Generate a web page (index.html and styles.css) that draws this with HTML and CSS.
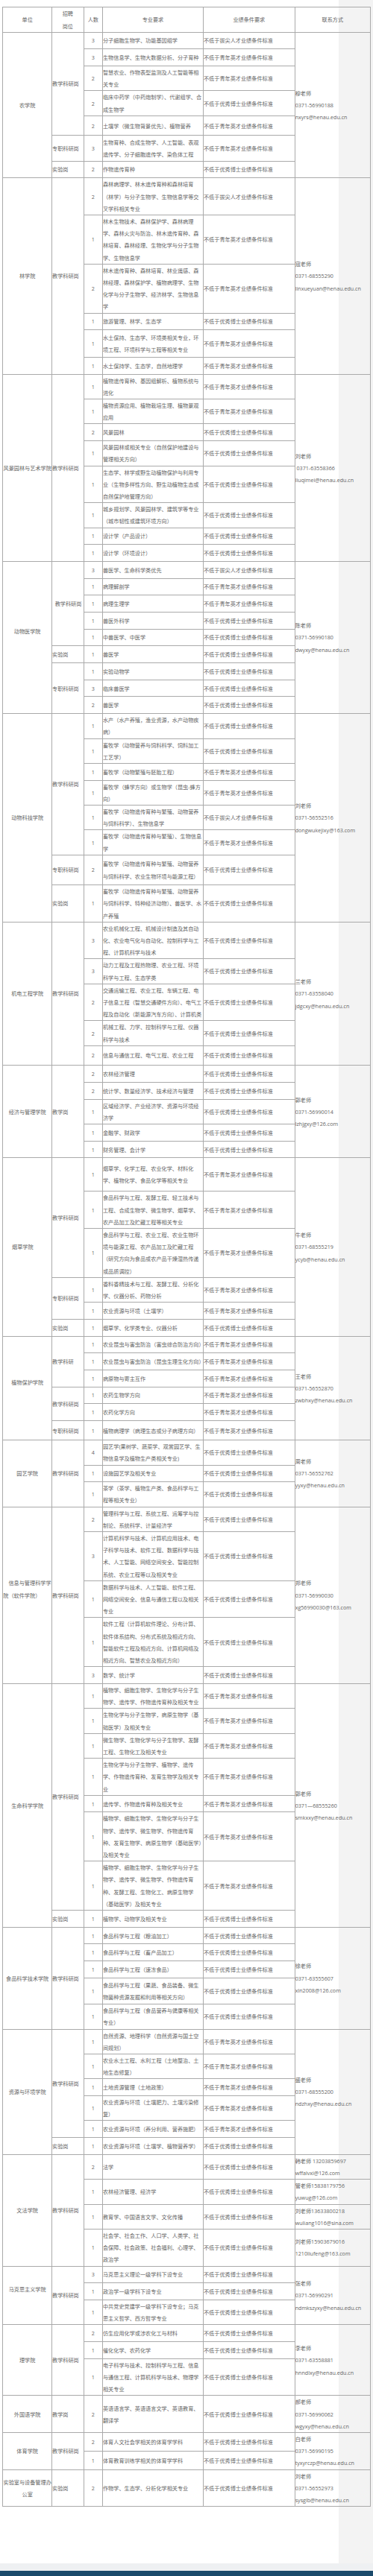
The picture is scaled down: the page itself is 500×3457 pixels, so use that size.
FILE: index.html
```html
<!DOCTYPE html>
<html lang="zh-CN">
<head>
<meta charset="utf-8">
<title>招聘岗位</title>
<link rel="stylesheet" href="styles.css">
</head>
<body>
<div class="page">
<div class="content">
<table class="jobs">
<colgroup>
<col class="c-unit"><col class="c-post"><col class="c-num"><col class="c-major"><col class="c-req"><col class="c-contact">
</colgroup>
<thead>
<tr class="head"><th>单位</th><th>招聘<br>岗位</th><th>人数</th><th>专业要求</th><th>业绩条件要求</th><th>联系方式</th></tr>
</thead>
<tbody>
<!-- 农学院 -->
<tr><td class="unit" rowspan="7">农学院</td><td class="post" rowspan="5">教学科研岗</td><td class="num">3</td><td>分子细胞生物学、功能基因组学</td><td>不低于拔尖人才业绩条件标准</td><td class="contact" rowspan="7">穆老师<br>0371-56990188<br>nxyrs@henau.edu.cn</td></tr>
<tr><td class="num">3</td><td>生物信息学、生物大数据分析、分子育种</td><td>不低于青年英才业绩条件标准</td></tr>
<tr><td class="num">2</td><td>智慧农业、作物表型监测及人工智能等相关专业</td><td>不低于青年英才业绩条件标准</td></tr>
<tr><td class="num">2</td><td>临床中药学（中药炮制学）、代谢组学、合成生物学</td><td>不低于优秀博士业绩条件标准</td></tr>
<tr class="row-27"><td class="num">2</td><td>土壤学（微生物背景优先）、植物营养</td><td>不低于青年英才业绩条件标准</td></tr>
<tr class="row-34"><td class="post">专职科研岗</td><td class="num">3</td><td>生物育种、合成生物学、人工智能、表观遗传学、分子细胞遗传学、染色体工程</td><td>不低于青年英才业绩条件标准</td></tr>
<tr><td class="post">实验岗</td><td class="num">2</td><td>作物遗传育种</td><td>不低于优秀博士业绩条件标准</td></tr>
<!-- 林学院 -->
<tr><td class="unit" rowspan="6">林学院</td><td class="post" rowspan="6">教学科研岗</td><td class="num">2</td><td>森林病理学、林木遗传育种和森林培育（林学）与分子生物学、生物信息学等交叉学科相关专业</td><td>不低于拔尖人才业绩条件标准</td><td class="contact" rowspan="6">寇老师<br>0371-68555290<br>linxueyuan@henau.edu.cn</td></tr>
<tr><td class="num">1</td><td>林木生物技术、森林保护学、森林病理学、森林火灾与防治、林木遗传育种、森林培育、森林经理、生物化学与分子生物学、生物信息学</td><td>不低于青年英才业绩条件标准</td></tr>
<tr><td class="num">2</td><td>林木遗传育种、森林培育、林业遥感、森林经理、森林保护学、植物病理学、生物化学与分子生物学、经济林学、生物信息学</td><td>不低于青年英才业绩条件标准</td></tr>
<tr><td class="num">1</td><td>旅游管理、林学、生态学</td><td>不低于优秀博士业绩条件标准</td></tr>
<tr class="row-37"><td class="num">1</td><td>水土保持、生态学、环境类相关专业，环境工程、环境科学与工程等相关专业</td><td>不低于青年英才业绩条件标准</td></tr>
<tr><td class="num">1</td><td>水土保持学、生态学，自然地理学</td><td>不低于青年英才业绩条件标准</td></tr>
<!-- 风景园林与艺术学院 -->
<tr><td class="unit" rowspan="8">风景园林与艺术学院</td><td class="post" rowspan="8">教学科研岗</td><td class="num">1</td><td>植物遗传育种、基因组解析、植物系统与进化</td><td>不低于青年英才业绩条件标准</td><td class="contact" rowspan="8">刘老师<br>&nbsp;0371-63558366<br>liuqimei@henau.edu.cn</td></tr>
<tr><td class="num">1</td><td>植物资源应用、植物栽培生理、植物景观应用</td><td>不低于青年英才业绩条件标准</td></tr>
<tr><td class="num">2</td><td>风景园林</td><td>不低于优秀博士业绩条件标准</td></tr>
<tr><td class="num">1</td><td>风景园林或相关专业（自然保护地建设与管理相关方向）</td><td>不低于优秀博士业绩条件标准</td></tr>
<tr><td class="num">1</td><td>生态学、林学或野生动植物保护与利用专业（生物多样性方向、野生动植物生态或自然保护地管理方向）</td><td>不低于优秀博士业绩条件标准</td></tr>
<tr><td class="num">1</td><td>城乡规划学、风景园林学、建筑学等专业（城市韧性或建筑环境方向）</td><td>不低于优秀博士业绩条件标准</td></tr>
<tr><td class="num">1</td><td>设计学（产品设计）</td><td>不低于优秀博士业绩条件标准</td></tr>
<tr><td class="num">1</td><td>设计学（环境设计）</td><td>不低于优秀博士业绩条件标准</td></tr>
<!-- 动物医学院 -->
<tr><td class="unit lift" rowspan="9">动物医学院</td><td class="post indent" rowspan="5">教学科研岗</td><td class="num">3</td><td>兽医学、生命科学类优先</td><td>不低于拔尖人才业绩条件标准</td><td class="contact" rowspan="9">陈老师<br>0371-56990180<br>dwyxy@henau.edu.cn</td></tr>
<tr><td class="num">1</td><td>病理解剖学</td><td>不低于青年英才业绩条件标准</td></tr>
<tr><td class="num">1</td><td>病理生理学</td><td>不低于青年英才业绩条件标准</td></tr>
<tr><td class="num">1</td><td>兽医外科学</td><td>不低于优秀博士业绩条件标准</td></tr>
<tr><td class="num">1</td><td>中兽医学、中医学</td><td>不低于优秀博士业绩条件标准</td></tr>
<tr><td class="post">实验岗</td><td class="num">1</td><td>兽医学</td><td>不低于优秀博士业绩条件标准</td></tr>
<tr><td class="post" rowspan="3">专职科研岗</td><td class="num">1</td><td>实验动物学</td><td>不低于优秀博士业绩条件标准</td></tr>
<tr><td class="num">3</td><td>临床兽医学</td><td>不低于优秀博士业绩条件标准</td></tr>
<tr><td class="num">2</td><td>兽医学</td><td>不低于优秀博士业绩条件标准</td></tr>
<!-- 动物科技学院 -->
<tr><td class="unit" rowspan="8">动物科技学院</td><td class="post" rowspan="6">教学科研岗</td><td class="num">1</td><td>水产（水产养殖，渔业资源，水产动物疾病）</td><td>不低于优秀博士业绩条件标准</td><td class="contact" rowspan="8">刘老师<br>0371-56552516<br>dongwukejixy@163.com</td></tr>
<tr><td class="num">1</td><td>畜牧学（动物营养与饲料科学、饲料加工工艺学）</td><td>不低于优秀博士业绩条件标准</td></tr>
<tr><td class="num">1</td><td>畜牧学（动物繁殖与胚胎工程）</td><td>不低于青年英才业绩条件标准</td></tr>
<tr><td class="num">1</td><td>畜牧学（蜂学方向）或生物学（昆虫-蜂方向）</td><td>不低于青年英才业绩条件标准</td></tr>
<tr><td class="num">1</td><td>畜牧学（动物遗传育种与繁殖、动物营养与饲料科学）、生物信息学</td><td>不低于拔尖人才业绩条件标准</td></tr>
<tr><td class="num">1</td><td>畜牧学（动物遗传育种与繁殖）、生物信息学</td><td>不低于青年英才业绩条件标准</td></tr>
<tr class="row-40"><td class="post">专职科研岗</td><td class="num">2</td><td>畜牧学（动物遗传育种与繁殖、动物营养与饲料科学、农业生物环境与能源工程）</td><td>不低于优秀博士业绩条件标准</td></tr>
<tr><td class="post">实验岗</td><td class="num">1</td><td>畜牧学（动物遗传育种与繁殖、动物营养与饲料科学、特种经济动物）、兽医学、水产养殖</td><td>不低于优秀博士业绩条件标准</td></tr>
<!-- 机电工程学院 -->
<tr><td class="unit" rowspan="5">机电工程学院</td><td class="post" rowspan="5">教学科研岗</td><td class="num">3</td><td>农业机械化工程、机械设计制造及其自动化、农业电气化与自动化、控制科学与工程、计算机科学与技术</td><td>不低于优秀博士业绩条件标准</td><td class="contact" rowspan="5">兰老师<br>0371-63558040<br>jdgcxy@henau.edu.cn</td></tr>
<tr><td class="num">3</td><td>动力工程及工程热物理、农业工程、环境科学与工程、生态学类</td><td>不低于优秀博士业绩条件标准</td></tr>
<tr><td class="num">2</td><td>交通运输工程、农业工程、车辆工程、电子信息工程（智慧交通硬件方向）、电气工程及自动化（新能源汽车方向）、计算机类</td><td>不低于优秀博士业绩条件标准</td></tr>
<tr><td class="num">2</td><td>机械工程、力学、控制科学与工程、仪器科学与技术</td><td>不低于优秀博士业绩条件标准</td></tr>
<tr class="row-27"><td class="num">2</td><td>信息与通信工程、电气工程、农业工程</td><td>不低于优秀博士业绩条件标准</td></tr>
<!-- 经济与管理学院 -->
<tr><td class="unit" rowspan="5">经济与管理学院</td><td class="post" rowspan="5">教学岗</td><td class="num">2</td><td>农林经济管理</td><td>不低于优秀博士业绩条件标准</td><td class="contact" rowspan="5">郭老师<br>0371-56990014<br>lzhjgxy@126.com</td></tr>
<tr><td class="num">2</td><td>统计学、数量经济学、技术经济与管理</td><td>不低于优秀博士业绩条件标准</td></tr>
<tr><td class="num">1</td><td>区域经济学、产业经济学、资源与环境经济学</td><td>不低于优秀博士业绩条件标准</td></tr>
<tr><td class="num">1</td><td>金融学、财政学</td><td>不低于优秀博士业绩条件标准</td></tr>
<tr><td class="num">1</td><td>财务管理、会计学</td><td>不低于优秀博士业绩条件标准</td></tr>
<!-- 烟草学院 -->
<tr class="row-45"><td class="unit shift" rowspan="6">烟草学院</td><td class="post" rowspan="3">教学科研岗</td><td class="num">1</td><td>烟草学、化学工程、农业化学、材料化学、植物化学、食品化学等相关专业</td><td>不低于青年英才业绩条件标准</td><td class="contact" rowspan="6">牛老师<br>0371-68555219<br>ycyb@henau.edu.cn</td></tr>
<tr><td class="num">1</td><td>食品科学与工程、发酵工程、轻工技术与工程、合成生物学、微生物学、烟草学、农产品加工及贮藏工程等相关专业</td><td>不低于青年英才业绩条件标准</td></tr>
<tr><td class="num">1</td><td>食品科学与工程、农业工程、农业生物环境与能源工程、农产品加工及贮藏工程（研究方向为食品或农产品干燥湿热传递或品质调控）</td><td>不低于青年英才业绩条件标准</td></tr>
<tr><td class="post" rowspan="2">专职科研岗</td><td class="num">1</td><td>香料香精技术与工程、发酵工程、分析化学、仪器分析、药物分析</td><td>不低于青年英才业绩条件标准</td></tr>
<tr><td class="num">1</td><td>农业资源与环境（土壤学）</td><td>不低于青年英才业绩条件标准</td></tr>
<tr><td class="post">实验岗</td><td class="num">1</td><td>烟草学、化学类专业、仪器分析</td><td>不低于优秀博士业绩条件标准</td></tr>
<!-- 植物保护学院 -->
<tr><td class="unit lift" rowspan="6">植物保护学院</td><td class="post" rowspan="3">教学科研</td><td class="num">1</td><td>农业昆虫与害虫防治（害虫综合防治方向）</td><td>不低于青年英才业绩条件标准</td><td class="contact" rowspan="6">王老师<br>0371-56552870<br>zwbhxy@henau.edu.cn</td></tr>
<tr><td class="num">1</td><td>农业昆虫与害虫防治（昆虫生理生化方向）</td><td>不低于青年英才业绩条件标准</td></tr>
<tr><td class="num">1</td><td>病原物与寄主互作</td><td>不低于青年英才业绩条件标准</td></tr>
<tr><td class="post" rowspan="2">教学科研岗</td><td class="num">1</td><td>农药生物学方向</td><td>不低于青年英才业绩条件标准</td></tr>
<tr><td class="num">1</td><td>农药化学方向</td><td>不低于青年英才业绩条件标准</td></tr>
<tr class="row-26"><td class="post">专职科研岗</td><td class="num">1</td><td>植物病理学（病理生态或分子病理方向）</td><td>不低于青年英才业绩条件标准</td></tr>
<!-- 园艺学院 -->
<tr><td class="unit" rowspan="3">园艺学院</td><td class="post" rowspan="3">教学科研岗</td><td class="num">4</td><td>园艺学(果树学、蔬菜学、观赏园艺学、生物信息学及植物生产类相关专业)</td><td>不低于优秀博士业绩条件标准</td><td class="contact" rowspan="3">周老师<br>0371-56552762<br>yyxy@henau.edu.cn</td></tr>
<tr><td class="num">1</td><td>设施园艺学及相关专业</td><td>不低于优秀博士业绩条件标准</td></tr>
<tr><td class="num">1</td><td>茶学（茶学、植物生产类、食品科学与工程等相关专业）</td><td>不低于优秀博士业绩条件标准</td></tr>
<!-- 信息与管理科学学院 -->
<tr><td class="unit left lift" rowspan="5">　信息与管理科学学院（软件学院）</td><td class="post" rowspan="5">教学科研岗</td><td class="num">2</td><td>管理科学与工程、系统工程、运筹学与控制论、系统科学、计量经济学</td><td>不低于优秀博士业绩条件标准</td><td class="contact" rowspan="5">郑老师<br>0371-56990030<br>xg56990030@163.com</td></tr>
<tr><td class="num">3</td><td>计算机科学与技术、计算机应用技术、电子科学与技术、软件工程、数据科学与技术、人工智能、网络空间安全、智能控制系统、农业工程等以及相关专业</td><td>不低于优秀博士业绩条件标准</td></tr>
<tr><td class="num">1</td><td>数据科学与技术、人工智能、软件工程、网络空间安全、信息与通信工程以及相关专业</td><td>不低于优秀博士业绩条件标准</td></tr>
<tr><td class="num">1</td><td>软件工程（计算机软件理论、分布计算、软件体系结构、分布式系统及相近方向、智能软件工程及相近方向、计算机网络及相近方向、智慧农业及相近方向）</td><td>不低于优秀博士业绩条件标准</td></tr>
<tr><td class="num">3</td><td>数学、统计学</td><td>不低于优秀博士业绩条件标准</td></tr>
<!-- 生命科学学院 -->
<tr><td class="unit" rowspan="8">生命科学学院</td><td class="post" rowspan="7">教学科研岗</td><td class="num">1</td><td>植物学、细胞生物学、生物化学与分子生物学、遗传学、作物遗传育种及相关专业</td><td>不低于青年英才业绩条件标准</td><td class="contact" rowspan="8">郭老师<br>0371—68555260<br>smkxxy@henau.edu.cn</td></tr>
<tr><td class="num">1</td><td>生物化学与分子生物学，病原生物学（基础医学）及相关专业</td><td>不低于青年英才业绩条件标准</td></tr>
<tr><td class="num">1</td><td>微生物学、生物化学与分子生物学、发酵工程、生物化工及相关专业</td><td>不低于青年英才业绩条件标准</td></tr>
<tr><td class="num">1</td><td>生物化学与分子生物学、植物学、遗传学、作物遗传育种、发育生物学及相关专业</td><td>不低于青年英才业绩条件标准</td></tr>
<tr><td class="num">1</td><td>遗传学、作物遗传育种及相关专业</td><td>不低于青年英才业绩条件标准</td></tr>
<tr><td class="num">1</td><td>植物学、细胞生物学、生物化学与分子生物学、遗传学、微生物学、作物遗传育种、发育生物学、病原生物学（基础医学）及相关专业</td><td>不低于青年英才业绩条件标准</td></tr>
<tr><td class="num">1</td><td>植物学、细胞生物学、生物化学与分子生物学、遗传学、微生物学、作物遗传育种、发酵工程、生物化工、病原生物学（基础医学）及相关专业</td><td>不低于青年英才业绩条件标准</td></tr>
<tr><td class="post">实验岗</td><td class="num">1</td><td>植物学、动物学及相关专业</td><td>不低于优秀博士业绩条件标准</td></tr>
<!-- 食品科学技术学院 -->
<tr><td class="unit" rowspan="5">食品科学技术学院</td><td class="post" rowspan="5">教学科研岗</td><td class="num">1</td><td>食品科学与工程（粮油加工）</td><td>不低于优秀博士业绩条件标准</td><td class="contact" rowspan="5">徐老师<br>0371-63555607<br>xln2008@126.com</td></tr>
<tr><td class="num">1</td><td>食品科学与工程（畜产品加工）</td><td>不低于优秀博士业绩条件标准</td></tr>
<tr><td class="num">1</td><td>食品科学与工程（速冻食品）</td><td>不低于优秀博士业绩条件标准</td></tr>
<tr class="row-35"><td class="num">1</td><td>食品科学与工程（果蔬、食品装备、微生物菌种资源发掘和利用等相关方向）</td><td>不低于优秀博士业绩条件标准</td></tr>
<tr><td class="num">1</td><td>食品科学与工程（食品营养与健康等相关专业）</td><td>不低于优秀博士业绩条件标准</td></tr>
<!-- 资源与环境学院 -->
<tr><td class="unit" rowspan="6">资源与环境学院</td><td class="post" rowspan="5">教学科研岗</td><td class="num">1</td><td>自然资源、地理科学（自然资源与国土空间规划）</td><td>不低于青年英才业绩条件标准</td><td class="contact" rowspan="6">盛老师<br>0371-68555200<br>ndzhxy@henau.edu.cn</td></tr>
<tr><td class="num">1</td><td>农业水土工程、水利工程（土地整治、土地生态修复）</td><td>不低于青年英才业绩条件标准</td></tr>
<tr><td class="num">1</td><td>土地资源管理（土地政策）</td><td>不低于青年英才业绩条件标准</td></tr>
<tr><td class="num">1</td><td>农业资源与环境（土壤肥力、土壤污染修复）</td><td>不低于青年英才业绩条件标准</td></tr>
<tr><td class="num">1</td><td>农业资源与环境（养分利用、营养施肥）</td><td>不低于青年英才业绩条件标准</td></tr>
<tr><td class="post">实验岗</td><td class="num">1</td><td>农业资源与环境（土壤学、植物营养学）</td><td>不低于优秀博士业绩条件标准</td></tr>
<!-- 文法学院 -->
<tr><td class="unit" rowspan="4">文法学院</td><td class="post" rowspan="4">教学科研岗</td><td class="num">2</td><td>法学</td><td>不低于优秀博士业绩条件标准</td><td class="contact">韩老师 13203859697<br>wffalvxi@126.com</td></tr>
<tr><td class="num">1</td><td>农林经济管理、经济学</td><td>不低于优秀博士业绩条件标准</td><td class="contact">管老师15838179756<br>yuwug@126.com</td></tr>
<tr><td class="num">1</td><td>教育学、中国语言文学、文化传播</td><td>不低于优秀博士业绩条件标准</td><td class="contact">刘老师13633800218<br>wuliang1016@sina.com</td></tr>
<tr><td class="num">1</td><td>社会学、社会工作、人口学、人类学、社会保障、社会政策、社会福利、心理学、政治学</td><td>不低于优秀博士业绩条件标准</td><td class="contact">刘老师15903679016<br>1210liufeng@163.com</td></tr>
<!-- 马克思主义学院 -->
<tr><td class="unit lift" rowspan="3">马克思主义学院</td><td class="post" rowspan="3">教学科研岗</td><td class="num">3</td><td>马克思主义理论一级学科下设专业</td><td>不低于优秀博士业绩条件标准</td><td class="contact" rowspan="3">张老师<br>0371-56990291<br>ndmkszyxy@henau.edu.cn</td></tr>
<tr><td class="num">1</td><td>政治学一级学科下设专业</td><td>不低于优秀博士业绩条件标准</td></tr>
<tr><td class="num">1</td><td>中共党史党建学一级学科下设专业；马克思主义哲学、西方哲学专业</td><td>不低于优秀博士业绩条件标准</td></tr>
<!-- 理学院 -->
<tr><td class="unit" rowspan="3">理学院</td><td class="post" rowspan="3">教学科研岗</td><td class="num">2</td><td>仿生应用化学或涉农化工与材料</td><td>不低于优秀博士业绩条件标准</td><td class="contact" rowspan="3">李老师<br>0371-63558881<br>hnndlxy@henau.edu.cn</td></tr>
<tr><td class="num">1</td><td>催化化学、农药化学</td><td>不低于优秀博士业绩条件标准</td></tr>
<tr><td class="num">1</td><td>电子科学与技术、控制科学与工程、信息与通信工程、计算机科学与技术、物理学相关专业</td><td>不低于优秀博士业绩条件标准</td></tr>
<!-- 外国语学院 -->
<tr><td class="unit">外国语学院</td><td class="post">教学岗</td><td class="num">2</td><td>英语语言学、英语语言文学、英语教育、翻译学</td><td>不低于优秀博士业绩条件标准</td><td class="contact">郝老师<br>0371-56990062<br>wgyxy@henau.edu.cn</td></tr>
<!-- 体育学院 -->
<tr class="row-25"><td class="unit" rowspan="2">体育学院</td><td class="post" rowspan="2">教学科研岗</td><td class="num">2</td><td>体育人文社会学相关的体育学学科</td><td>不低于优秀博士业绩条件标准</td><td class="contact" rowspan="2">白老师<br>0371-56990195<br>tyxyrczp@henau.edu.cn</td></tr>
<tr class="row-24"><td class="num">1</td><td>体育教育训练学相关的体育学学科</td><td>不低于优秀博士业绩条件标准</td></tr>
<!-- 实验室与设备管理办公室 -->
<tr><td class="unit">实验室与设备管理办公室</td><td class="post">实验岗</td><td class="num">2</td><td>作物学、生态学、分析化学相关专业</td><td>不低于优秀博士业绩条件标准</td><td class="contact">刘老师<br>0371-56552973<br>sysglb@henau.edu.cn</td></tr>
</tbody>
</table>
</div>
<div class="band"></div>
<div class="footer"></div>
</div>
</body>
</html>
```

FILE: styles.css
```css
html, body {
  margin: 0;
  padding: 0;
}

body {
  font-family: "Open Sans", "Noto Sans CJK SC", sans-serif;
  font-size: 7.15px;
  color: #666;
  background: #fff;
}

.page {
  background: linear-gradient(to right, #fff 0, #fff 454px, #f3f3f3 454px, #f3f3f3 100%);
}

.content {
  box-sizing: border-box;
  min-height: 3440px;
  padding: 9.3px 0 0 3.3px;
}

.jobs {
  border-collapse: collapse;
  table-layout: fixed;
  width: 492.7px;
  line-height: 16.2px;
}

.c-unit { width: 65.7px; }
.c-post { width: 42.7px; }
.c-num { width: 25.3px; }
.c-major { width: 135px; }
.c-req { width: 122.7px; }
.c-contact { width: 101.3px; }

.jobs th,
.jobs td {
  border: 1px solid #aaa;
  padding: 0;
  vertical-align: middle;
  text-align: left;
  font-weight: normal;
}

.jobs tr {
  height: 22.7px;
}

.jobs th {
  text-align: center;
}

.jobs .unit {
  text-align: center;
}

.jobs .unit.left {
  text-align: left;
}

.jobs .unit.shift {
  text-align: left;
  padding-left: 11.7px;
}

.jobs .unit.lift {
  padding-bottom: 16.2px;
}

.jobs .post.indent {
  padding-left: 3.7px;
}

.jobs .num {
  text-align: center;
}

.jobs .contact {
  white-space: nowrap;
}

.jobs tr.row-24 { height: 24px; }
.jobs tr.row-25 { height: 25.3px; }
.jobs tr.row-26 { height: 26px; }
.jobs tr.row-27 { height: 26.5px; }
.jobs tr.row-34 { height: 34.3px; }
.jobs tr.row-35 { height: 35.3px; }
.jobs tr.row-37 { height: 36.7px; }
.jobs tr.row-40 { height: 40.3px; }
.jobs tr.row-45 { height: 45px; }

.band {
  height: 10px;
  background: #eef0f2;
}

.footer {
  height: 40px;
  background: #1b4a6b;
}
```
